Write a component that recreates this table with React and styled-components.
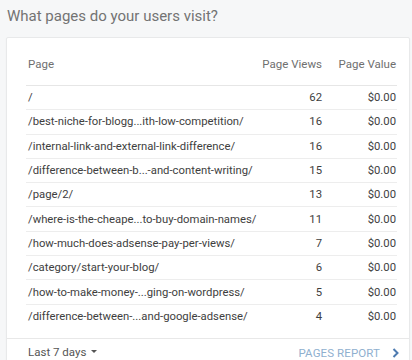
import React from 'react';
import styled, { createGlobalStyle } from 'styled-components';

const GlobalStyle = createGlobalStyle`
  html, body {
    margin: 0;
    padding: 0;
    background: #f6f7f8;
    font-family: Roboto, "Liberation Sans", Arial, sans-serif;
  }
`;

const rows = [
  { page: '/', views: 62, value: '$0.00' },
  { page: '/best-niche-for-blogg...ith-low-competition/', views: 16, value: '$0.00' },
  { page: '/internal-link-and-external-link-difference/', views: 16, value: '$0.00' },
  { page: '/difference-between-b...-and-content-writing/', views: 15, value: '$0.00' },
  { page: '/page/2/', views: 13, value: '$0.00' },
  { page: '/where-is-the-cheape...to-buy-domain-names/', views: 11, value: '$0.00' },
  { page: '/how-much-does-adsense-pay-per-views/', views: 7, value: '$0.00' },
  { page: '/category/start-your-blog/', views: 6, value: '$0.00' },
  { page: '/how-to-make-money-...ging-on-wordpress/', views: 5, value: '$0.00' },
  { page: '/difference-between-...and-google-adsense/', views: 4, value: '$0.00' },
];

const Wrapper = styled.div`
  width: 412px;
  height: 360px;
  overflow: hidden;
  padding-top: 6px;
  box-sizing: border-box;
`;

const Title = styled.h2`
  margin: 0 0 0 7px;
  height: 20px;
  font-size: 15px;
  line-height: 20px;
  font-weight: 400;
  color: #737373;
`;

const Card = styled.div`
  margin: 11px 2px 0 6px;
  background: #fff;
  border: 1px solid #e8e9ea;
  border-radius: 2px;
  box-shadow: 0 1px 2px rgba(0, 0, 0, 0.04);
`;

const Body = styled.div`
  padding: 5px 12px 10px 19px;
`;

const Table = styled.div`
  display: grid;
  grid-template-columns: minmax(0, 1fr) 64px 74px;
`;

const HeadCell = styled.div`
  height: 42px;
  display: flex;
  align-items: center;
  justify-content: ${p => (p.$right ? 'flex-end' : 'flex-start')};
  padding: 0 ${p => (p.$right ? '1px' : '0')} 0 2px;
  font-size: 11.5px;
  color: #6f6f6f;
  white-space: nowrap;
  border-bottom: 1px solid #e6e6e6;
`;

const Cell = styled.div`
  height: 23.3px;
  display: flex;
  align-items: center;
  justify-content: ${p => (p.$right ? 'flex-end' : 'flex-start')};
  padding: 0 ${p => (p.$right ? '1px' : '0')} 0 2px;
  font-size: 11.3px;
  color: #3e3e3e;
  white-space: nowrap;
  border-bottom: ${p => (p.$last ? 'none' : '1px solid #ededed')};
`;

const Footer = styled.div`
  display: flex;
  align-items: center;
  justify-content: space-between;
  height: 26px;
  padding: 0 10px 0 21px;
  border-top: 1px solid #e8e8e8;
`;

const Range = styled.div`
  display: flex;
  align-items: center;
  gap: 5px;
  font-size: 11.5px;
  color: #555;
`;

const Caret = styled.span`
  width: 0;
  height: 0;
  border-left: 3px solid transparent;
  border-right: 3px solid transparent;
  border-top: 3px solid #555;
`;

const ReportLink = styled.a`
  display: flex;
  align-items: center;
  gap: 12px;
  padding-top: 2px;
  font-size: 11.5px;
  color: #8fb0cf;
  text-decoration: none;
  letter-spacing: 0.1px;
`;

const Chevron = () => (
  <svg width="7" height="10" viewBox="0 0 7 10">
    <path d="M1.5 1 L5.5 5 L1.5 9" fill="none" stroke="#4e7bb0" strokeWidth="2" />
  </svg>
);

export default function App() {
  return (
    <Wrapper>
      <GlobalStyle />
      <Title>What pages do your users visit?</Title>
      <Card>
        <Body>
          <Table>
            <HeadCell>Page</HeadCell>
            <HeadCell $right>Page Views</HeadCell>
            <HeadCell $right>Page Value</HeadCell>
            {rows.map((r, i) => {
              const last = i === rows.length - 1;
              return (
                <React.Fragment key={r.page}>
                  <Cell $last={last}>{r.page}</Cell>
                  <Cell $right $last={last}>{r.views}</Cell>
                  <Cell $right $last={last}>{r.value}</Cell>
                </React.Fragment>
              );
            })}
          </Table>
        </Body>
        <Footer>
          <Range>
            Last 7 days <Caret />
          </Range>
          <ReportLink href="#">
            PAGES REPORT <Chevron />
          </ReportLink>
        </Footer>
      </Card>
    </Wrapper>
  );
}
